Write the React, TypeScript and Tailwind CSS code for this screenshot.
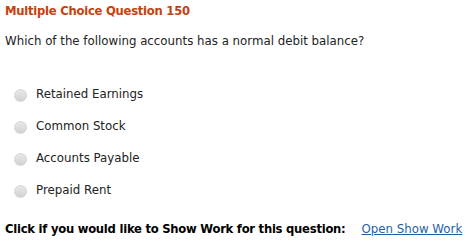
export default function App() {
  const options = ['Retained Earnings', 'Common Stock', 'Accounts Payable', 'Prepaid Rent']

  return (
    <div
      className="h-[245px] w-[474px] bg-white px-[5px] pt-[2px] text-[#222]"
      style={{ fontFamily: '"DejaVu Sans", Verdana, sans-serif' }}
    >
      <h2 className="text-[11.6px] font-bold leading-[18px] tracking-[-0.25px] text-[#c8400c]">
        Multiple Choice Question 150
      </h2>
      <p className="mt-[12px] text-[11.8px] leading-[18px]">
        Which of the following accounts has a normal debit balance?
      </p>

      <ul className="mt-[36px] flex flex-col gap-[14px] pl-[9px]">
        {options.map((opt) => (
          <li key={opt} className="flex h-[18px] items-center gap-[9px]">
            <span className="h-[13px] w-[13px] rounded-full border border-[#d6d6d6] bg-gradient-to-b from-[#e8e8e8] to-[#d2d2d2]" />
            <span className="text-[11.8px]">{opt}</span>
          </li>
        ))}
      </ul>

      <div className="mt-[21px] flex items-center gap-[16px] whitespace-nowrap">
        <span className="text-[11.6px] font-bold tracking-[-0.25px] text-black">
          Click if you would like to Show Work for this question:
        </span>
        <a href="#" className="text-[11.8px] text-[#1f5fa6] underline">
          Open Show Work
        </a>
      </div>
    </div>
  )
}
